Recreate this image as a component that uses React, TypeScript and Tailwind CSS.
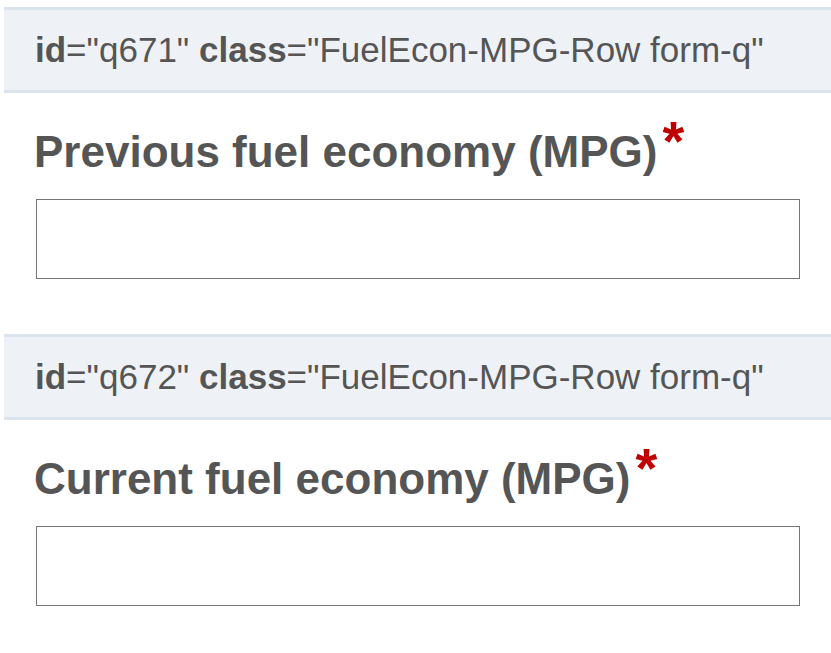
export default function App() {
  const rows = [
    { id: "q671", label: "Previous fuel economy (MPG)" },
    { id: "q672", label: "Current fuel economy (MPG)" },
  ];

  return (
    <div className="w-[831px] h-[653px] overflow-hidden bg-white pt-[7px] font-['Liberation_Sans',Arial,sans-serif] text-[#555555]">
      {rows.map((row, i) => (
        <div key={row.id} className={i > 0 ? "mt-[55px]" : ""}>
          {/* debug label band */}
          <div className="ml-[4px] border-y-[3px] border-[#dae4ef] bg-[#eef2f6] pl-[31px] pt-[20px] pb-[20px] text-[35px] leading-[40px] whitespace-nowrap">
            <b>id</b>="{row.id}" <b>class</b>="FuelEcon-MPG-Row form-q"
          </div>
          <label
            htmlFor={row.id + "-input"}
            className="block mt-[34px] pl-[34px] text-[44px] leading-[50px] font-bold whitespace-nowrap"
          >
            {row.label}
            <span className="relative -top-[7px] ml-[5px] text-[56px] leading-[0] text-[#c00000]">*</span>
          </label>
          <input
            id={row.id + "-input"}
            type="text"
            className="block mt-[22px] ml-[36px] w-[764px] h-[80px] border border-[#767676] bg-white"
          />
        </div>
      ))}
    </div>
  );
}
